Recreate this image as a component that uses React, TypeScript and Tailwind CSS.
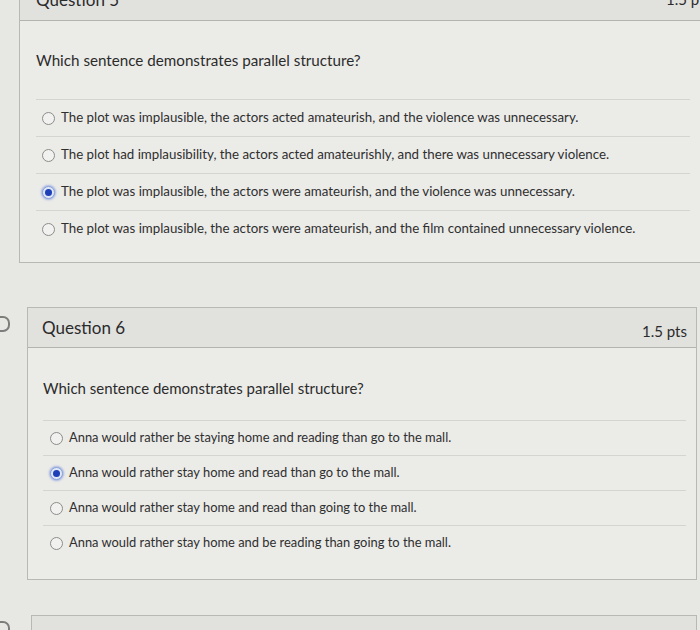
import React from "react";

type Question = {
  title: string;
  prompt: string;
  options: string[];
  selected: number;
};

const q5: Question = {
  title: "Question 5",
  prompt: "Which sentence demonstrates parallel structure?",
  options: [
    "The plot was implausible, the actors acted amateurish, and the violence was unnecessary.",
    "The plot had implausibility, the actors acted amateurishly, and there was unnecessary violence.",
    "The plot was implausible, the actors were amateurish, and the violence was unnecessary.",
    "The plot was implausible, the actors were amateurish, and the film contained unnecessary violence.",
  ],
  selected: 2,
};

const q6: Question = {
  title: "Question 6",
  prompt: "Which sentence demonstrates parallel structure?",
  options: [
    "Anna would rather be staying home and reading than go to the mall.",
    "Anna would rather stay home and read than go to the mall.",
    "Anna would rather stay home and read than going to the mall.",
    "Anna would rather stay home and be reading than going to the mall.",
  ],
  selected: 1,
};

const Radio = ({ checked }: { checked: boolean }) =>
  checked ? (
    <span className="flex h-[13px] w-[13px] shrink-0 items-center justify-center rounded-full border border-[#8aa3d8] bg-[#dfe6f5] shadow-[0_0_2px_1px_rgba(70,110,220,0.45)]">
      <span className="h-[7px] w-[7px] rounded-full bg-[#1d3fb8]" />
    </span>
  ) : (
    <span className="h-[13px] w-[13px] shrink-0 rounded-full border border-[#8c8c8a] bg-[#f1f1ef]" />
  );

const Options = ({
  q,
  rowH,
  indent,
  textSize,
}: {
  q: Question;
  rowH: string;
  indent: string;
  textSize: string;
}) => (
  <div className="flex flex-col">
    {q.options.map((o, i) => (
      <div
        key={i}
        className={`flex items-center gap-[6px] border-t border-[#d4d4d1] ${rowH} ${indent}`}
      >
        <Radio checked={q.selected === i} />
        <span className={`${textSize} text-[#2f2f2f]`}>{o}</span>
      </div>
    ))}
  </div>
);

const Flag = () => (
  <div className="absolute left-[-4px] h-[16px] w-[14px] rounded-r-[7px] border-2 border-l-0 border-[#7d7d7b]" />
);

export default function App() {
  return (
    <div
      className="h-[630px] w-[700px] overflow-hidden bg-[#e7e7e4] text-[#2b2b2b]"
      style={{ fontFamily: "Lato, 'Open Sans', sans-serif" }}
    >
      {/* question 5, scrolled off top */}
      <div className="relative ml-[19px] mr-[-22px] mt-[-22px] border border-[#b8b8b5] bg-[#ebebe8]">
        <div className="flex h-[42px] items-center justify-between border-b border-[#b3b3b0] bg-[#e1e1de] pl-[16px] pr-[10px]">
          <span className="text-[17px]">{q5.title}</span>
          <span className="text-[15px]">1.5 pts</span>
        </div>
        <div className="pb-[15px] pl-[16px] pr-[31px]">
          <p className="pb-[29px] pt-[29px] text-[15.2px] leading-[20px]">
            {q5.prompt}
          </p>
          <Options
            q={q5}
            rowH="h-[37px]"
            indent="pl-[6px]"
            textSize="text-[13.3px]"
          />
        </div>
      </div>

      {/* question 6 */}
      <div className="relative mt-[44px]">
        <div className="absolute top-[9px]">
          <Flag />
        </div>
        <div className="ml-[27px] mr-[3px] border border-[#b8b8b5] bg-[#ebebe8]">
          <div className="flex h-[40px] items-center justify-between border-b border-[#b3b3b0] bg-[#e1e1de] pl-[14px] pr-[9px]">
            <span className="text-[17px]">{q6.title}</span>
            <span className="mt-[8px] text-[15px]">1.5 pts</span>
          </div>
          <div className="pb-[19px] pl-[15px] pr-[10px]">
            <p className="pb-[22px] pt-[30px] text-[15px] leading-[20px]">
              {q6.prompt}
            </p>
            <Options
              q={q6}
              rowH="h-[35px]"
              indent="pl-[7px]"
              textSize="text-[12.9px]"
            />
          </div>
        </div>
      </div>

      {/* question 7, peeking */}
      <div className="relative mt-[35px]">
        <div className="absolute top-[6px]">
          <Flag />
        </div>
        <div className="ml-[31px] mr-[3px] h-[40px] border border-[#b8b8b5] bg-[#e1e1de]" />
      </div>
    </div>
  );
}
